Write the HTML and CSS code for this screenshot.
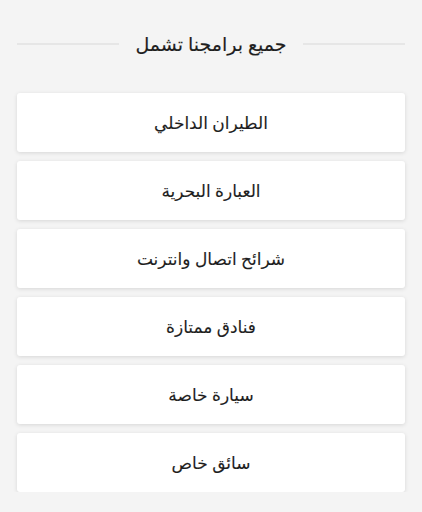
FILE: index.html
```html
<!DOCTYPE html>
<html lang="ar" dir="rtl">
<head>
<meta charset="utf-8">
<link rel="stylesheet" href="styles.css">
</head>
<body>
<div class="page">
  <div class="heading">
    <span class="line"></span>
    <h2 class="title">جميع برامجنا تشمل</h2>
    <span class="line"></span>
  </div>
  <ul class="list">
    <li class="card">الطيران الداخلي</li>
    <li class="card">العبارة البحرية</li>
    <li class="card">شرائح اتصال وانترنت</li>
    <li class="card">فنادق ممتازة</li>
    <li class="card">سيارة خاصة</li>
    <li class="card">سائق خاص</li>
  </ul>
</div>
</body>
</html>
```
FILE: styles.css
```css
html, body {
  margin: 0;
  padding: 0;
  background: #f4f4f4;
}
body {
  font-family: "Noto Sans", "DejaVu Sans", sans-serif;
  color: #1e1e1e;
}
.page {
  padding: 30px 17px 0;
}
.heading {
  display: flex;
  align-items: center;
  gap: 16px;
  height: 28px;
}
.line {
  flex: 1;
  height: 2px;
  background: #e6e6e6;
}
.title {
  margin: 0;
  font-size: 19px;
  font-weight: normal;
  color: #1e1e1e;
  -webkit-text-stroke: 0.15px #1e1e1e;
  white-space: nowrap;
}
.list {
  list-style: none;
  margin: 35px 0 0;
  padding: 0;
  display: flex;
  flex-direction: column;
  gap: 9px;
}
.card {
  height: 59px;
  background: #fff;
  border-radius: 3px;
  box-shadow: 0 1px 4px rgba(0,0,0,0.12);
  display: flex;
  align-items: center;
  justify-content: center;
  font-size: 17px;
  color: #1e1e1e;
  -webkit-text-stroke: 0.12px #1e1e1e;
}
```
